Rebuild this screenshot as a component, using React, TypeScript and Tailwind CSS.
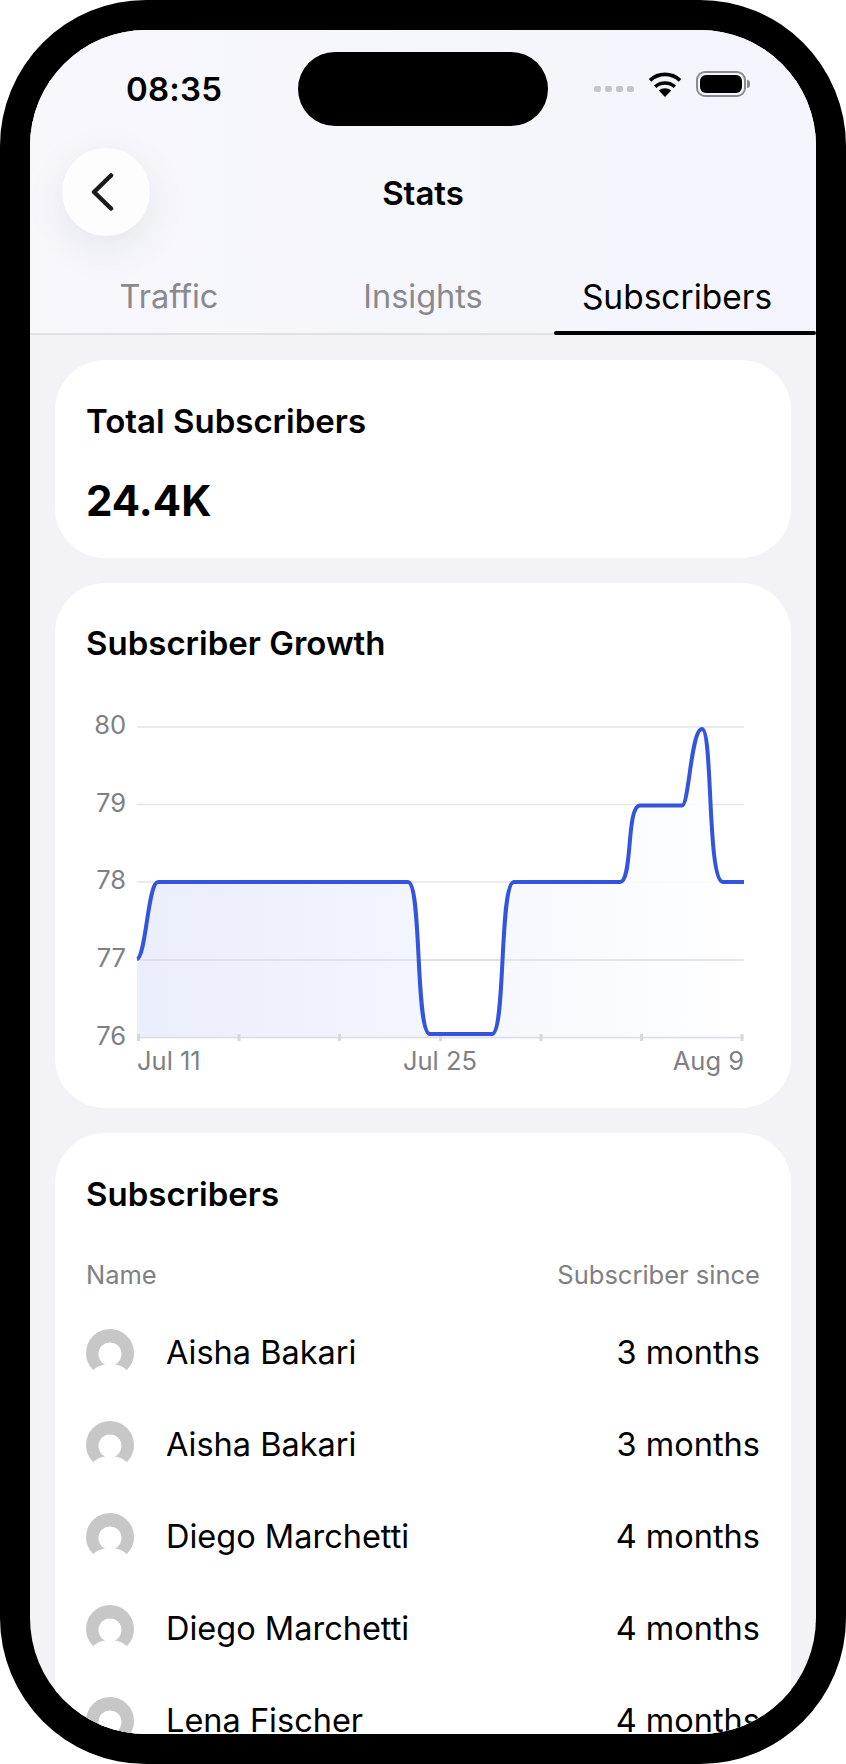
const SUBSCRIBERS = [
  { name: "Aisha Bakari", since: "3 months" },
  { name: "Aisha Bakari", since: "3 months" },
  { name: "Diego Marchetti", since: "4 months" },
  { name: "Diego Marchetti", since: "4 months" },
  { name: "Lena Fischer", since: "4 months" },
];

const FONT = "font-['Inter',sans-serif]";

const GRID = [
  { label: "80", y: 727 },
  { label: "79", y: 804.5 },
  { label: "78", y: 882 },
  { label: "77", y: 960 },
  { label: "76", y: 1037.5 },
];

const TICKS = [138.5, 239, 339.5, 440.5, 541, 641.5, 742];

// the chart is drawn in page coordinates, see the viewBox
const LINE =
  "M137 959 C146 957 148 882 158 882 L408 882 C422 882 415 1034 430 1034 L492 1034 C506 1034 499 882 514 882 L620 882 C633 882 626 805.5 640 805.5 L682 805.5 C689 805.5 691 729 702 729 C713 729 707 882 723 882 L744 882";

function Chart() {
  return (
    <svg viewBox="85 700 680 380" className="block h-[380px] w-[680px]">
      <defs>
        <linearGradient id="area" x1="0" y1="0" x2="1" y2="0">
          <stop offset="0" stopColor="#e8ecfb" />
          <stop offset="0.45" stopColor="#f1f4fd" />
          <stop offset="1" stopColor="#ffffff" />
        </linearGradient>
      </defs>
      {GRID.map((g) => (
        <g key={g.label}>
          <line x1="137" x2="744" y1={g.y} y2={g.y} stroke="#e5e5e8" strokeWidth="1.5" />
          <text x="126" y={g.y + 7} textAnchor="end" fontFamily="Inter, sans-serif" fontSize="25.5" fill="#808084">
            {g.label}
          </text>
        </g>
      ))}
      <path d={`${LINE} L744 1037.5 L137 1037.5 Z`} fill="url(#area)" fillOpacity="0.9" />
      {GRID.slice(3).map((g) => (
        <line key={g.label} x1="137" x2="744" y1={g.y} y2={g.y} stroke="#dcdde6" strokeWidth="1.5" />
      ))}
      {TICKS.map((x) => (
        <line key={x} x1={x} x2={x} y1="1034" y2="1041" stroke="#d8d8dc" strokeWidth="3" />
      ))}
      <path d={LINE} fill="none" stroke="#3355dd" strokeWidth="4" strokeLinejoin="round" />
      <g fontFamily="Inter, sans-serif" fontSize="25.5" fill="#808084">
        <text x="137" y="1070">Jul 11</text>
        <text x="440" y="1070" textAnchor="middle">Jul 25</text>
        <text x="744" y="1070" textAnchor="end">Aug 9</text>
      </g>
    </svg>
  );
}

function Avatar() {
  return (
    <svg viewBox="0 0 48 48" className="h-12 w-12 shrink-0">
      <circle cx="24" cy="24" r="24" fill="#c7c7c7" />
      <circle cx="24" cy="25" r="11.5" fill="#ffffff" />
      <ellipse cx="24" cy="52" rx="22" ry="17" fill="#ffffff" />
    </svg>
  );
}

function Wifi() {
  return (
    <svg viewBox="0 0 34 26" className="h-[26px] w-[34px]">
      <path d="M17 26 L10.8 19.6 C14.2 16.6 19.8 16.6 23.2 19.6 Z" fill="#000" />
      <path d="M7.2 15.8 C12.6 10.8 21.4 10.8 26.8 15.8" fill="none" stroke="#000" strokeWidth="3.6" />
      <path d="M2 9.4 C10.4 1.4 23.6 1.4 32 9.4" fill="none" stroke="#000" strokeWidth="3.6" />
    </svg>
  );
}

function Battery() {
  return (
    <div className="flex items-center gap-[1px]">
      <div className="flex h-[26px] w-[50px] rounded-[9px] border-2 border-[#8a8a8e] p-[2px]">
        <div className="flex-1 rounded-[6px] bg-black" />
      </div>
      <div className="h-[8px] w-[3px] rounded-r-full bg-[#8a8a8e]" />
    </div>
  );
}

export default function App() {
  return (
    <div className={`h-[1764px] w-[846px] bg-white ${FONT}`}>
      <div className="h-full w-full rounded-[146px] bg-black p-[30px]">
        <div className="relative flex h-full flex-col overflow-hidden rounded-[116px] bg-[#f2f2f7]">
          <div className="absolute left-[268px] top-[22px] h-[74px] w-[250px] rounded-full bg-black" />

          <header className="bg-gradient-to-r from-[#f7f7fc] to-[#f4f5fc]">
            <div className="flex h-[118px] items-start justify-between pl-[96px] pr-[66px] pt-[33px]">
              <span className="mt-[1px] text-[33px] font-semibold leading-[50px] tracking-[0.2px] text-black">08:35</span>
              <div className="flex items-center pt-[8px]">
                <div className="mt-[10px] flex gap-[4px]">
                  <span className="h-[6px] w-[7px] rounded-[2px] bg-[#c5c5c9]" />
                  <span className="h-[6px] w-[7px] rounded-[2px] bg-[#c5c5c9]" />
                  <span className="h-[6px] w-[7px] rounded-[2px] bg-[#c5c5c9]" />
                  <span className="h-[6px] w-[7px] rounded-[2px] bg-[#c5c5c9]" />
                </div>
                <div className="ml-[14px] mr-[14px]">
                  <Wifi />
                </div>
                <Battery />
              </div>
            </div>

            <div className="relative flex h-[88px] items-center justify-center">
              <button className="absolute left-[32px] top-0 flex h-[88px] w-[88px] items-center justify-center rounded-full bg-[#fdfdfe] shadow-[0_12px_40px_rgba(60,60,90,0.09)]">
                <svg viewBox="0 0 24 40" className="-ml-[6px] h-[40px] w-[24px]">
                  <path d="M20 3.5 L3 20 L20 36.5" fill="none" stroke="#1a1a1a" strokeWidth="4.5" strokeLinecap="round" strokeLinejoin="round" />
                </svg>
              </button>
              <h1 className="mt-[3px] text-[33px] font-semibold text-black">Stats</h1>
            </div>

            <div className="mt-[36px] grid h-[63px] grid-cols-3 border-b-2 border-[#e2e2e6] text-[32.5px] leading-[50px]">
              <div className="pl-4 text-center text-[#8a8a8e]">Traffic</div>
              <div className="text-center text-[#8a8a8e]">Insights</div>
              <div className="relative pr-4 text-center text-[33.5px] text-black">
                Subscribers
                <span className="absolute inset-x-0 bottom-[-2px] h-[4px] rounded-full bg-black" />
              </div>
            </div>
          </header>

          <main className="flex flex-col gap-[25px] px-[25px] pt-[25px]">
            <section className="h-[198px] rounded-[50px] bg-white pl-[31px] pt-[39px]">
              <h2 className="text-[33px] font-semibold leading-[44px] text-black">Total Subscribers</h2>
              <p className="mt-[30px] text-[42px] font-bold leading-[56px] text-black">24.4K</p>
            </section>

            <section className="h-[525px] rounded-[50px] bg-white pl-[31px] pt-[38px]">
              <h2 className="text-[33px] font-semibold leading-[44px] text-black">Subscriber Growth</h2>
              <div className="-ml-[1px] mt-[35px]">
                <Chart />
              </div>
            </section>

            <section className="rounded-[50px] bg-white px-[31px] pb-[40px] pt-[39px]">
              <h2 className="text-[33px] font-semibold leading-[44px] text-black">Subscribers</h2>
              <div className="mt-[41px] flex justify-between text-[25.5px] leading-[36px] text-[#808084]">
                <span>Name</span>
                <span>Subscriber since</span>
              </div>
              <div className="mt-[14px] flex flex-col">
                {SUBSCRIBERS.map((s, i) => (
                  <div key={i} className="flex h-[92px] items-center">
                    <Avatar />
                    <span className="ml-[32px] flex-1 text-[32.5px] text-black">{s.name}</span>
                    <span className="text-[32.5px] text-black">{s.since}</span>
                  </div>
                ))}
              </div>
            </section>
          </main>
        </div>
      </div>
    </div>
  );
}
